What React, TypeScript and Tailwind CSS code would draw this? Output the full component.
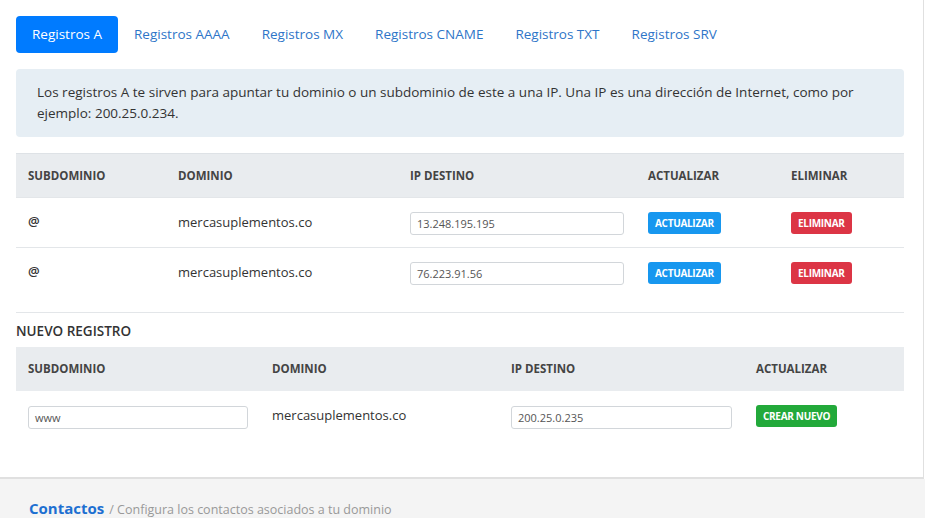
import React from "react";

const tabs = ["Registros A", "Registros AAAA", "Registros MX", "Registros CNAME", "Registros TXT", "Registros SRV"];

function Btn({ label, color }: { label: string; color: string }) {
  return (
    <button
      className={`block h-[22px] px-[7px] rounded-[3px] text-white text-[10px] font-bold tracking-[-0.3px] leading-[22px] ${color}`}
    >
      {label}
    </button>
  );
}

function Input({ value, w }: { value: string; w: string }) {
  return (
    <div
      className={`h-[23px] ${w} border border-[#d2d6da] rounded-[3px] bg-white px-[6px] text-[11px] leading-[21px] text-[#555]`}
    >
      {value}
    </div>
  );
}

export default function App() {
  const rows = ["13.248.195.195", "76.223.91.56"];
  return (
    <div className="w-[925px] h-[518px] overflow-hidden bg-white text-[#333]" style={{ fontFamily: '"Open Sans", "Noto Sans", sans-serif' }}>
      <div className="w-[924px] h-[479px] border-r border-b-2 border-[#e0e0e0] pl-4 pr-[19px] pt-4">
        {/* Tabs */}
        <div className="flex h-[37px] items-center">
          {tabs.map((t, i) => (
            <div
              key={t}
              className={
                i === 0
                  ? "h-[37px] px-4 rounded-[4px] bg-[#007bff] text-white text-[13.5px] leading-[37px]"
                  : "h-[37px] px-4 text-[#2e75c8] text-[13.5px] leading-[37px]"
              }
            >
              {t}
            </div>
          ))}
        </div>

        {/* Alert */}
        <div className="mt-4 h-[68px] rounded-[4px] bg-[#e6eef4] px-[21px] py-[13px] text-[13.5px] leading-[21px] text-[#333]">
          Los registros A te sirven para apuntar tu dominio o un subdominio de este a una IP. Una IP es una dirección de Internet, como por ejemplo: 200.25.0.234.
        </div>

        {/* Table 1 */}
        <div className="mt-4">
          <div className="grid grid-cols-[150px_232px_238px_143px_125px] h-[44px] items-center bg-[#e9ecef] border-t border-[#dee2e6] text-[11.5px] font-bold text-[#444]">
            <div className="px-3">SUBDOMINIO</div>
            <div className="px-3">DOMINIO</div>
            <div className="px-3">IP DESTINO</div>
            <div className="px-3">ACTUALIZAR</div>
            <div className="px-3">ELIMINAR</div>
          </div>
          {rows.map((ip, i) => (
            <div
              key={ip}
              className={`grid grid-cols-[150px_232px_238px_143px_125px] items-start pt-[14px] border-t border-[#e3e6e9] ${i === 1 ? "h-[66px] border-b" : "h-[50px]"}`}
            >
              <div className="px-3 text-[13px] leading-[16px] font-semibold pt-[1px]">@</div>
              <div className="px-3 text-[13px] leading-[16px] pt-[2px]">mercasuplementos.co</div>
              <div className="px-3 flex">
                <Input value={ip} w="w-[214px]" />
              </div>
              <div className="px-3 flex">
                <Btn label="ACTUALIZAR" color="bg-[#1797ef]" />
              </div>
              <div className="px-3 flex">
                <Btn label="ELIMINAR" color="bg-[#dc3545]" />
              </div>
            </div>
          ))}
        </div>

        <div className="mt-[8px] text-[13.5px] leading-[20px] font-semibold text-[#333]">NUEVO REGISTRO</div>

        {/* Table 2 */}
        <div className="mt-[6px]">
          <div className="grid grid-cols-[244px_239px_245px_160px] h-[44px] items-center bg-[#e9ecef] text-[11.5px] font-bold text-[#444]">
            <div className="px-3">SUBDOMINIO</div>
            <div className="px-3">DOMINIO</div>
            <div className="px-3">IP DESTINO</div>
            <div className="px-3">ACTUALIZAR</div>
          </div>
          <div className="grid grid-cols-[244px_239px_245px_160px] items-start pt-[15px]">
            <div className="px-3 flex">
              <Input value="www" w="w-[220px]" />
            </div>
            <div className="px-3 text-[13px] leading-[16px] pt-[1px]">mercasuplementos.co</div>
            <div className="px-3 flex">
              <Input value="200.25.0.235" w="w-[221px]" />
            </div>
            <div className="px-3 flex -mt-[1px]">
              <Btn label="CREAR NUEVO" color="bg-[#22a93a]" />
            </div>
          </div>
        </div>
      </div>

      {/* Bottom section */}
      <div className="h-[39px] bg-[#f4f4f4] pl-[29px] pt-[20px] flex items-baseline gap-[5px]">
        <span className="text-[15px] leading-[18px] font-bold text-[#1d6fd1]">Contactos</span>
        <span className="text-[12.5px] leading-[18px] text-[#999]">/ Configura los contactos asociados a tu dominio</span>
      </div>
    </div>
  );
}
